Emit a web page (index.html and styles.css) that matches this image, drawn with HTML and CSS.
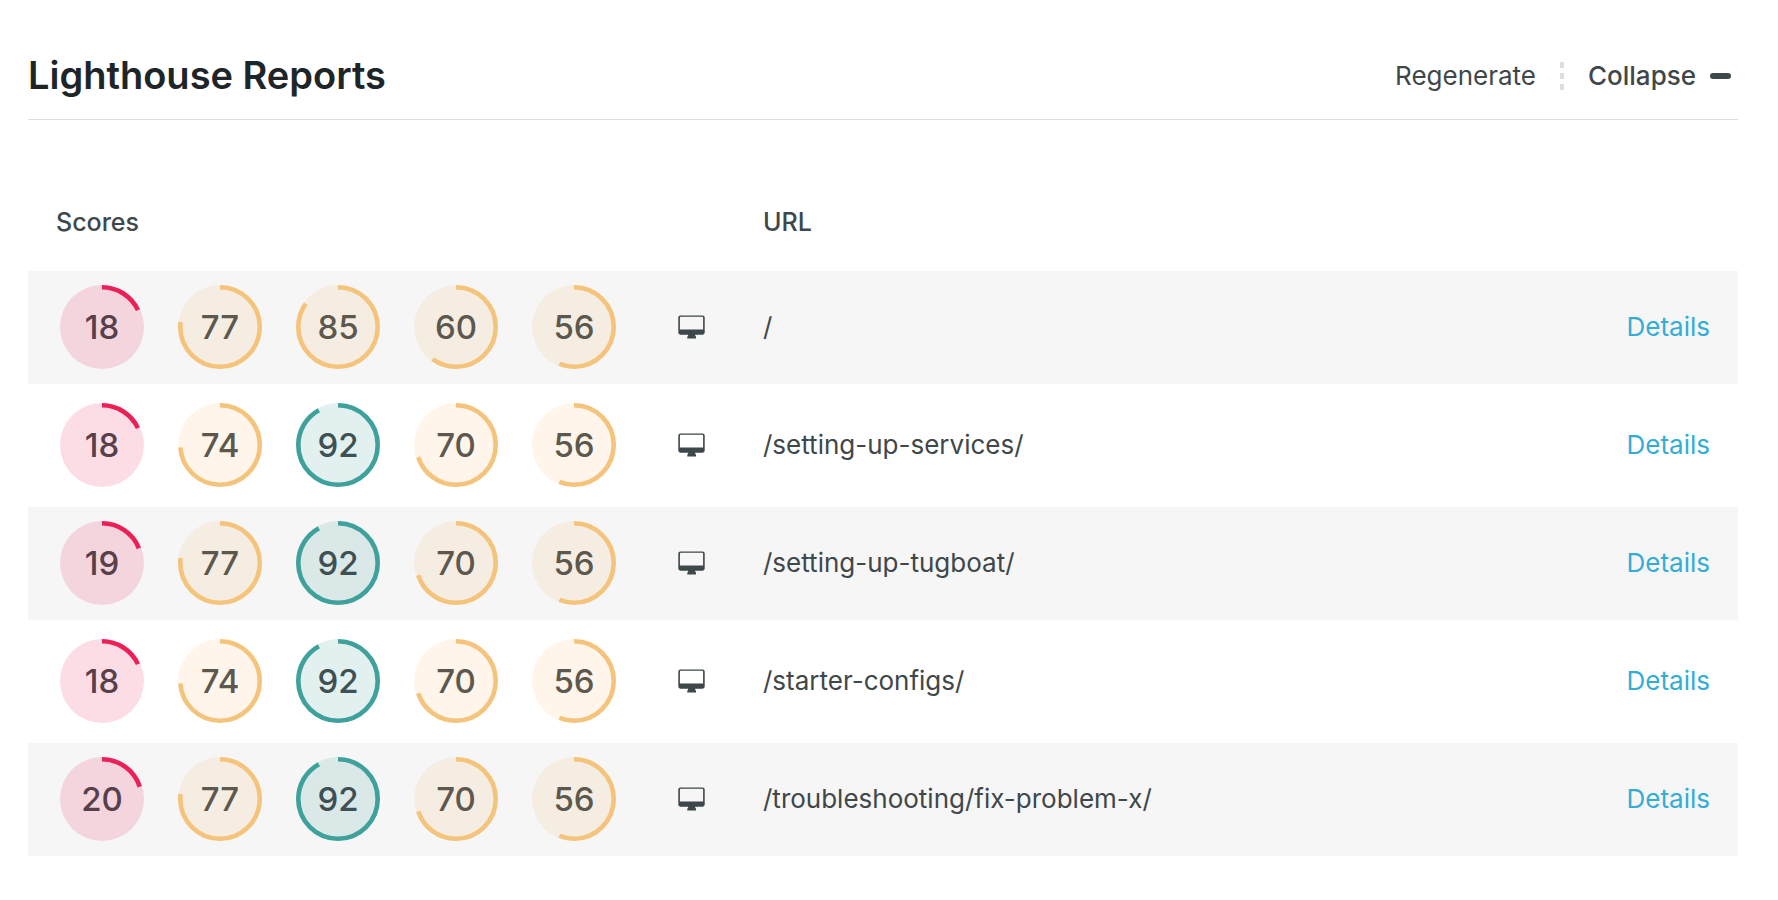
FILE: index.html
```
<!DOCTYPE html>
<html lang="en">
<head>
<meta charset="utf-8">
<title>Lighthouse Reports</title>
<link rel="stylesheet" href="styles.css">
</head>
<body>
<svg class="sprite" aria-hidden="true">
  <symbol id="desktop" viewBox="0 0 27 24">
    <path fill-rule="evenodd" d="M2.4 0.5H24.6A2.1 2.1 0 0 1 26.7 2.6V17.6A2.1 2.1 0 0 1 24.6 19.7H17.2V21.3H18V23.4H9.3V21.3H10.1V19.7H2.4A2.1 2.1 0 0 1 .3 17.6V2.6A2.1 2.1 0 0 1 2.4 .5ZM2.9 1.8A1 1 0 0 0 1.9 2.8V14.4H25.1V2.8A1 1 0 0 0 24.1 1.8Z"/>
  </symbol>
</svg>
<main class="reports">
  <header class="reports-header">
    <h1 class="title">Lighthouse Reports</h1>
    <div class="actions">
      <button class="action" type="button">Regenerate</button>
      <span class="divider"></span>
      <button class="action action-strong" type="button" aria-expanded="true">Collapse <span class="minus"></span></button>
    </div>
  </header>
  <table class="table">
    <thead>
      <tr><th class="scores-head">Scores</th><th class="device-cell"></th><th class="url-cell">URL</th><th class="details-cell"></th></tr>
    </thead>
    <tbody id="rows"></tbody>
  </table>
</main>
<script src="reports.js"></script>
</body>
</html>
```
FILE: styles.css
```
* {
  box-sizing: border-box;
}

body {
  margin: 0;
  background: #fff;
  color: #3e474a;
  font-family: Inter, "Open Sans", sans-serif;
  font-size: 26px;
  line-height: 36px;
}

.sprite {
  display: none;
}

.reports {
  padding: 48px 40px 0 28px;
}

.reports-header {
  display: flex;
  align-items: center;
  justify-content: space-between;
  padding-bottom: 17px;
  border-bottom: 1px solid #dedede;
}

.title {
  margin: 0;
  color: #1d2529;
  font-size: 38px;
  font-weight: 600;
  line-height: 54px;
}

.actions {
  display: flex;
  align-items: center;
  gap: 24px;
  padding: 2px 7px 0 0;
}

.action {
  display: flex;
  align-items: center;
  gap: 14px;
  padding: 0;
  border: 0;
  background: none;
  color: inherit;
  font: inherit;
  cursor: pointer;
}

.action-strong {
  font-weight: 500;
}

.divider {
  width: 4px;
  height: 28px;
  background: repeating-linear-gradient(#dedede 0 6px, transparent 6px 11px);
}

.minus {
  width: 21px;
  height: 6px;
  border-radius: 3px;
  background: #3e474a;
}

.table {
  width: 100%;
  margin-top: 48px;
  border-spacing: 0 5px;
  table-layout: fixed;
}

th {
  height: 93px;
  padding: 4px 0 0;
  font-size: 25px;
  font-weight: 500;
  text-align: left;
}

td {
  height: 113px;
  padding: 0 0 2px;
}

.scores-head {
  width: 620px;
  padding-left: 28px;
}

.device-cell {
  width: 115px;
}

.details-cell {
  width: 160px;
  padding-right: 28px;
  text-align: right;
}

.row:nth-child(odd) td {
  background: #f6f6f6;
}

.scores {
  display: flex;
  gap: 34px;
  margin: 0;
  padding: 0 0 0 32px;
  list-style: none;
}

.score {
  display: grid;
  place-items: center;
  width: 84px;
  height: 84px;
  border-radius: 50%;
  background: var(--fill);
  color: var(--text);
  font-size: 33px;
  font-weight: 500;
}

.score > * {
  grid-area: 1 / 1;
}

.ring {
  width: 84px;
  height: 84px;
  fill: none;
  stroke: var(--ring);
  stroke-width: 4.6;
}

.poor {
  --fill: #fcdde5;
  --ring: #ec2057;
  --text: #58404a;
}

.average {
  --fill: #fff5ea;
  --ring: #f5c47c;
  --text: #5c584e;
}

.good {
  --fill: #e2f0ef;
  --ring: #3fa19b;
  --text: #3e5053;
}

.row:nth-child(odd) .poor {
  --fill: #f4d5dd;
}

.row:nth-child(odd) .average {
  --fill: #f6ede2;
}

.row:nth-child(odd) .good {
  --fill: #dae8e7;
}

.device {
  display: block;
  width: 27px;
  height: 24px;
  margin-left: 30px;
  fill: #3e474a;
}

.link {
  color: #33add6;
  text-decoration: none;
}
```
FILE: reports.js
```
const reports = [
  { url: "/", scores: [18, 77, 85, 60, 56] },
  { url: "/setting-up-services/", scores: [18, 74, 92, 70, 56] },
  { url: "/setting-up-tugboat/", scores: [19, 77, 92, 70, 56] },
  { url: "/starter-configs/", scores: [18, 74, 92, 70, 56] },
  { url: "/troubleshooting/fix-problem-x/", scores: [20, 77, 92, 70, 56] }
];

const grade = (n) => (n < 50 ? "poor" : n < 90 ? "average" : "good");

const score = (n) => `
  <li class="score ${grade(n)}">
    <svg class="ring" viewBox="0 0 84 84" aria-hidden="true">
      <circle cx="42" cy="42" r="39.7" pathLength="100" stroke-dasharray="${n} 100" transform="rotate(-90 42 42)"/>
    </svg>
    <span>${n}</span>
  </li>`;

document.getElementById("rows").innerHTML = reports.map((r) => `
  <tr class="row">
    <td><ul class="scores">${r.scores.map(score).join("")}</ul></td>
    <td class="device-cell"><svg class="device" role="img" aria-label="Desktop"><use href="#desktop"/></svg></td>
    <td class="url-cell">${r.url}</td>
    <td class="details-cell"><a class="link" href="#">Details</a></td>
  </tr>`).join("");
```
